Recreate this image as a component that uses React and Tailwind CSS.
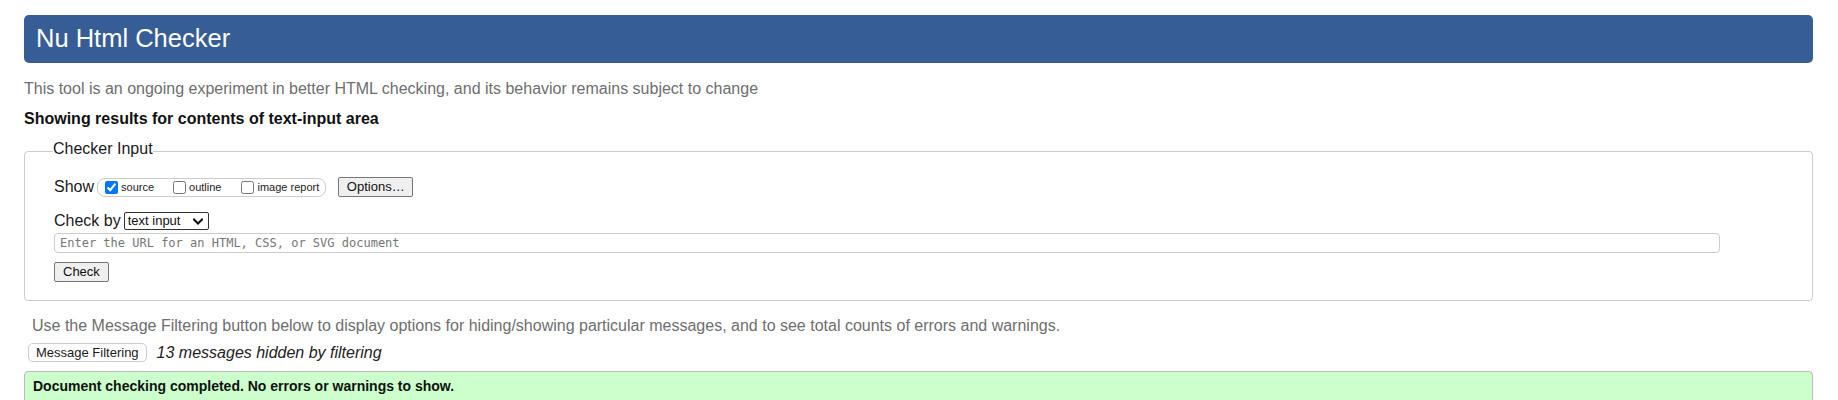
function Chevron() {
  return (
    <svg width="10" height="7" viewBox="0 0 10 7" fill="none">
      <path d="M1 1.5 L5 5.5 L9 1.5" stroke="#111" strokeWidth="2" strokeLinecap="square" />
    </svg>
  );
}

function ShowOption({ label, checked, className }) {
  return (
    <label className={`flex items-center ${className}`}>
      <input type="checkbox" defaultChecked={checked} className="h-[13px] w-[13px] accent-[#0075ff]" />
      <span className="ml-[3px] text-[11px] leading-[13px] text-[#222]">{label}</span>
    </label>
  );
}

export default function App() {
  return (
    <div className="min-h-[400px] bg-white pl-[24px] pr-[25px] pt-[15px] font-['Liberation_Sans',Arial,sans-serif] text-[16px] leading-[20px] text-[#222]">
      <header className="flex h-[48px] items-center rounded-[5px] bg-[#365d95] pb-[2px] pl-[12px]">
        <h1 className="text-[25.5px] font-normal leading-[30px] text-white">Nu Html Checker</h1>
      </header>

      <p className="mt-[16px] text-[#6e6e6e]">
        This tool is an ongoing experiment in better HTML checking, and its behavior remains subject to change
      </p>
      <p className="mt-[10px] font-bold text-[#111]">Showing results for contents of text-input area</p>

      <fieldset className="mt-[11px] rounded-[4px] border border-[#cccccc] pb-[18px] pl-[29px] pr-[20px] pt-[15px]">
        <legend className="-ml-[1px] pb-[4px] leading-[18px] text-[#1a1a1a]">Checker Input</legend>

        <div className="flex h-[20px] items-center">
          <span className="text-[#1a1a1a]">Show</span>
          <div className="ml-[3px] flex h-[19px] items-center rounded-[8px] border border-[#cccccc] pl-[7px] pr-[6px]">
            <ShowOption label="source" checked />
            <ShowOption label="outline" className="ml-[19px]" />
            <ShowOption label="image report" className="ml-[20px]" />
          </div>
          <button className="ml-[12px] h-[20px] w-[75px] rounded-[2px] border border-[#767676] bg-[#efefef] text-[13px] leading-[16px] text-[#111]">
            Options…
          </button>
        </div>

        <div className="mt-[15px] flex h-[18px] items-center">
          <span className="text-[#1a1a1a]">Check by</span>
          <div className="ml-[3px] flex h-[18px] w-[85px] items-center justify-between rounded-[2px] border border-[#333] pl-[3px] pr-[5px] text-[13px] leading-[16px] text-[#111]">
            <span>text input</span>
            <Chevron />
          </div>
        </div>

        <input
          type="text"
          placeholder="Enter the URL for an HTML, CSS, or SVG document"
          className="mt-[3px] block h-[20px] w-[1666px] rounded-[4px] border border-[#cccccc] pl-[5px] font-['DejaVu_Sans_Mono',monospace] text-[12px] placeholder:text-[#767676]"
        />

        <button className="mt-[9px] block h-[20px] rounded-[2px] border border-[#767676] bg-[#efefef] px-[8px] text-[13px] leading-[16px] text-[#111]">
          Check
        </button>
      </fieldset>

      <p className="mt-[15px] pl-[8px] text-[#6e6e6e]">
        Use the Message Filtering button below to display options for hiding/showing particular messages, and to see total counts of errors and warnings.
      </p>

      <div className="mt-[7px] flex h-[19px] items-center pl-[4px]">
        <button className="h-[19px] rounded-[5px] border border-[#cccccc] bg-white px-[7px] text-[13px] leading-[16px] text-[#1a1a1a]">
          Message Filtering
        </button>
        <span className="ml-[10px] italic text-[#222]">13 messages hidden by filtering</span>
      </div>

      <div className="mt-[9px] rounded-[4px] border border-[#bbbbbb] bg-[#ccffcc] pb-[6px] pl-[8px] pt-[4px] text-[14px] font-bold leading-[20px] text-[#111]">
        Document checking completed. No errors or warnings to show.
      </div>
    </div>
  );
}
